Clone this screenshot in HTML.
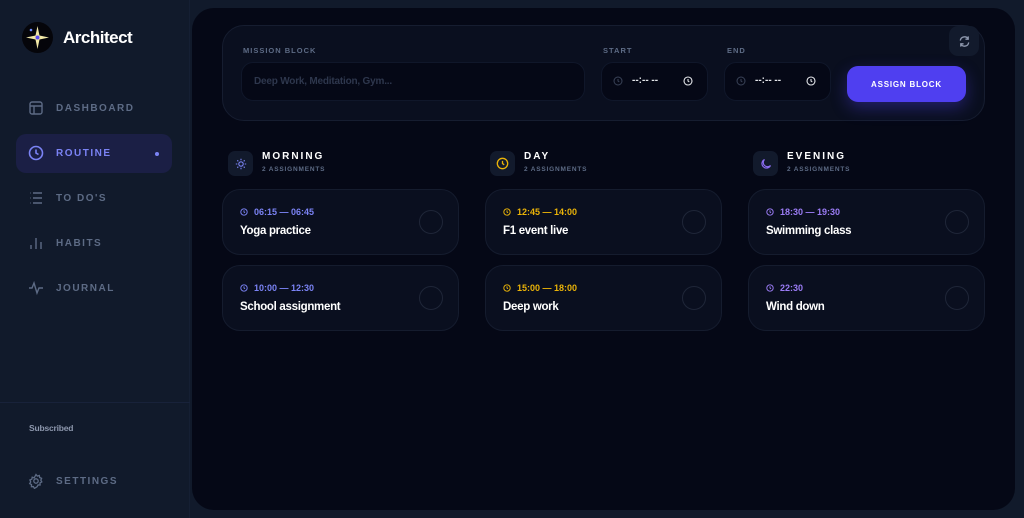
<!DOCTYPE html>
<html><head><style>
*{box-sizing:border-box;margin:0;padding:0}
body{width:1024px;height:518px;background:#111a2b;font-family:"Liberation Sans",sans-serif;position:relative;overflow:hidden}
.abs{position:absolute}
.side{left:0;top:0;width:190px;height:518px;background:#111a2b;border-right:1px solid #151f33}
.nav{position:absolute;left:28px;display:flex;align-items:center;font-size:10px;font-weight:bold;letter-spacing:1.5px;color:#5d6b85}
.nav svg{width:16px;height:16px;margin-right:12px}
.main{left:192px;top:8px;width:823px;height:502px;background:#050816;border-radius:22px}
.form{left:222px;top:25px;width:763px;height:96px;background:#0a0f1f;border:1px solid #161d30;border-radius:22px}
.lbl{font-size:7.5px;font-weight:bold;letter-spacing:1px;color:#5d6b85}
.inp{background:#050816;border:1px solid #10172a;border-radius:12px}
.col{position:absolute;top:151px;width:237px}
.hic{width:25px;height:25px;border-radius:7px;background:#121a2c;display:flex;align-items:center;justify-content:center}
.ht{position:absolute;left:34px;top:0;font-size:10px;font-weight:bold;letter-spacing:2px;color:#fff}
.hs{position:absolute;left:34px;top:15px;font-size:6.5px;font-weight:bold;letter-spacing:.8px;color:#5d6b85}
.card{position:absolute;left:0;width:237px;height:66px;background:#0a0f1f;border:1px solid #151c2e;border-radius:18px}
.tm{position:absolute;left:17px;top:17px;font-size:9px;font-weight:bold;display:flex;align-items:center}
.tm svg{margin-right:6px}
.nm{position:absolute;left:17px;top:35px;font-size:11.5px;font-weight:bold;color:#fff;letter-spacing:-.3px}
.cb{position:absolute;right:15px;top:20px;width:24px;height:24px;border-radius:50%;border:1.5px solid #1f2638}
</style></head><body>
<div class="abs side">
  <svg class="abs" style="left:22px;top:22px" width="31" height="31" viewBox="0 0 31 31"><circle cx="15.5" cy="15.5" r="15.5" fill="#05050a"/><path d="M15.5 4 L17.5 13.5 L27 15.5 L17.5 17.5 L15.5 27 L13.5 17.5 L4 15.5 L13.5 13.5Z" fill="#f2e9a8"/><circle cx="15.5" cy="15.5" r="2" fill="#5a4af0"/><circle cx="9" cy="8" r="1.3" fill="#6f8cff"/></svg>
  <div class="abs" style="left:63px;top:28px;font-size:17px;font-weight:bold;color:#fff;letter-spacing:-.5px">Architect</div>
  <div class="nav" style="top:100px"><svg viewBox="0 0 16 16" fill="none" stroke="#5d6b85" stroke-width="1.4"><rect x="2" y="2" width="12" height="12" rx="2"/><path d="M2 6h12M6 6v8"/></svg>DASHBOARD</div>
  <div class="abs" style="left:16px;top:134px;width:156px;height:39px;background:#1b1f45;border-radius:10px"></div>
  <div class="nav" style="top:145px;color:#7b83f5"><svg viewBox="0 0 16 16" fill="none" stroke="#7b83f5" stroke-width="1.6"><circle cx="8" cy="8" r="6.5"/><path d="M8 4.5V8l2.5 1.5"/></svg>ROUTINE</div>
  <div class="abs" style="left:155px;top:152px;width:4px;height:4px;border-radius:50%;background:#7b83f5"></div>
  <div class="nav" style="top:190px"><svg viewBox="0 0 16 16" fill="none" stroke="#5d6b85" stroke-width="1.4"><path d="M5 3h9M5 8h9M5 13h9M2 3h.5M2 8h.5M2 13h.5"/></svg>TO DO'S</div>
  <div class="nav" style="top:235px"><svg viewBox="0 0 16 16" fill="none" stroke="#5d6b85" stroke-width="1.4"><path d="M3 14v-4M8 14V3M13 14V7"/></svg>HABITS</div>
  <div class="nav" style="top:280px"><svg viewBox="0 0 16 16" fill="none" stroke="#5d6b85" stroke-width="1.4"><path d="M1 8h3l2-5 3 10 2-5h4"/></svg>JOURNAL</div>
  <div class="abs" style="left:0;top:402px;width:190px;height:1px;background:#18223a"></div>
  <div class="abs" style="left:29px;top:423px;font-size:8.5px;font-weight:bold;color:#8d97ad;letter-spacing:-.2px">Subscribed</div>
  <div class="nav" style="top:473px"><svg viewBox="0 0 16 16" fill="none" stroke="#5d6b85" stroke-width="1.3"><circle cx="8" cy="8" r="2.2"/><path d="M8 1.5l1.3 1.6 2-.6.4 2 1.9.8-.8 1.9 1 1.7-1.8 1 .1 2.1-2-.1-1 1.8L8 14.5l-1.6.9-1-1.8-2 .1.1-2.1-1.8-1 1-1.7-.8-1.9 1.9-.8.4-2 2 .6z"/></svg>SETTINGS</div>
</div>
<div class="abs main"></div>
<div class="abs form"></div>
<div class="abs lbl" style="left:243px;top:46px">MISSION BLOCK</div>
<div class="abs inp" style="left:241px;top:62px;width:344px;height:39px"></div>
<div class="abs" style="left:254px;top:76px;font-size:10px;font-weight:bold;color:#2e374d;letter-spacing:-.2px">Deep Work, Meditation, Gym...</div>
<div class="abs lbl" style="left:603px;top:46px">START</div>
<div class="abs lbl" style="left:727px;top:46px">END</div>
<div class="abs inp" style="left:601px;top:62px;width:107px;height:39px"></div>
<div class="abs inp" style="left:724px;top:62px;width:107px;height:39px"></div>
<svg class="abs" style="left:613px;top:76px" width="10" height="10" viewBox="0 0 10 10" fill="none" stroke="#3a4358" stroke-width="1"><circle cx="5" cy="5" r="4"/><path d="M5 3v2l1.3 1"/></svg>
<svg class="abs" style="left:736px;top:76px" width="10" height="10" viewBox="0 0 10 10" fill="none" stroke="#3a4358" stroke-width="1"><circle cx="5" cy="5" r="4"/><path d="M5 3v2l1.3 1"/></svg>
<div class="abs" style="left:632px;top:75px;font-size:10px;font-weight:bold;color:#e5e7eb">--:-- --</div>
<div class="abs" style="left:755px;top:75px;font-size:10px;font-weight:bold;color:#e5e7eb">--:-- --</div>
<svg class="abs" style="left:683px;top:76px" width="10" height="10" viewBox="0 0 10 10" fill="none" stroke="#e5e7eb" stroke-width="1.1"><circle cx="5" cy="5" r="4"/><path d="M5 3v2l1.3 1"/></svg>
<svg class="abs" style="left:806px;top:76px" width="10" height="10" viewBox="0 0 10 10" fill="none" stroke="#e5e7eb" stroke-width="1.1"><circle cx="5" cy="5" r="4"/><path d="M5 3v2l1.3 1"/></svg>
<div class="abs" style="left:847px;top:66px;width:119px;height:36px;background:#4f3ff0;border-radius:11px;box-shadow:0 6px 16px rgba(79,63,240,.35);color:#fff;font-size:8px;font-weight:bold;letter-spacing:.8px;display:flex;align-items:center;justify-content:center">ASSIGN BLOCK</div>
<div class="abs" style="left:949px;top:26px;width:30px;height:30px;background:#121a2c;border-radius:9px;display:flex;align-items:center;justify-content:center"><svg width="13" height="13" viewBox="0 0 14 14" fill="none" stroke="#8d97ad" stroke-width="1.4"><path d="M2.5 6A4.5 4.5 0 0 1 11 4.5M11.5 8A4.5 4.5 0 0 1 3 9.5M11 1.5v3H8M3 12.5v-3h3"/></svg></div>

<div class="col" style="left:222px">
  <div class="abs hic" style="left:6px;top:0"><svg width="12" height="12" viewBox="0 0 12 12" fill="none" stroke="#7b83f5" stroke-width="1.1"><circle cx="6" cy="6" r="2.2"/><path d="M6 .8v1.5M6 9.7v1.5M.8 6h1.5M9.7 6h1.5M2.3 2.3l1 1M8.7 8.7l1 1M2.3 9.7l1-1M8.7 3.3l1-1"/></svg></div>
  <div class="ht" style="left:40px">MORNING</div><div class="hs" style="left:40px">2 ASSIGNMENTS</div>
  <div class="card" style="top:38px"><div class="tm" style="color:#7b83f5"><svg width="8" height="8" viewBox="0 0 10 10" fill="none" stroke="#7b83f5" stroke-width="1.2"><circle cx="5" cy="5" r="4"/><path d="M5 3v2l1.3 1"/></svg>06:15 — 06:45</div><div class="nm">Yoga practice</div><div class="cb"></div></div>
  <div class="card" style="top:114px"><div class="tm" style="color:#7b83f5"><svg width="8" height="8" viewBox="0 0 10 10" fill="none" stroke="#7b83f5" stroke-width="1.2"><circle cx="5" cy="5" r="4"/><path d="M5 3v2l1.3 1"/></svg>10:00 — 12:30</div><div class="nm">School assignment</div><div class="cb"></div></div>
</div>
<div class="col" style="left:485px">
  <div class="abs hic" style="left:5px;top:0"><svg width="13" height="13" viewBox="0 0 10 10" fill="none" stroke="#eab308" stroke-width="1"><circle cx="5" cy="5" r="4"/><path d="M5 3v2l1.3 1"/></svg></div>
  <div class="ht" style="left:39px">DAY</div><div class="hs" style="left:39px">2 ASSIGNMENTS</div>
  <div class="card" style="top:38px"><div class="tm" style="color:#eab308"><svg width="8" height="8" viewBox="0 0 10 10" fill="none" stroke="#eab308" stroke-width="1.2"><circle cx="5" cy="5" r="4"/><path d="M5 3v2l1.3 1"/></svg>12:45 — 14:00</div><div class="nm">F1 event live</div><div class="cb"></div></div>
  <div class="card" style="top:114px"><div class="tm" style="color:#eab308"><svg width="8" height="8" viewBox="0 0 10 10" fill="none" stroke="#eab308" stroke-width="1.2"><circle cx="5" cy="5" r="4"/><path d="M5 3v2l1.3 1"/></svg>15:00 — 18:00</div><div class="nm">Deep work</div><div class="cb"></div></div>
</div>
<div class="col" style="left:748px">
  <div class="abs hic" style="left:5px;top:0"><svg width="12" height="12" viewBox="0 0 12 12" fill="none" stroke="#8b6cf0" stroke-width="1.2"><path d="M10.5 7.5A4.5 4.5 0 1 1 4.5 1.5a3.5 3.5 0 0 0 6 6z"/></svg></div>
  <div class="ht" style="left:39px">EVENING</div><div class="hs" style="left:39px">2 ASSIGNMENTS</div>
  <div class="card" style="top:38px"><div class="tm" style="color:#9b7cf5"><svg width="8" height="8" viewBox="0 0 10 10" fill="none" stroke="#9b7cf5" stroke-width="1.2"><circle cx="5" cy="5" r="4"/><path d="M5 3v2l1.3 1"/></svg>18:30 — 19:30</div><div class="nm">Swimming class</div><div class="cb"></div></div>
  <div class="card" style="top:114px"><div class="tm" style="color:#9b7cf5"><svg width="8" height="8" viewBox="0 0 10 10" fill="none" stroke="#9b7cf5" stroke-width="1.2"><circle cx="5" cy="5" r="4"/><path d="M5 3v2l1.3 1"/></svg>22:30</div><div class="nm">Wind down</div><div class="cb"></div></div>
</div>
</body></html>
